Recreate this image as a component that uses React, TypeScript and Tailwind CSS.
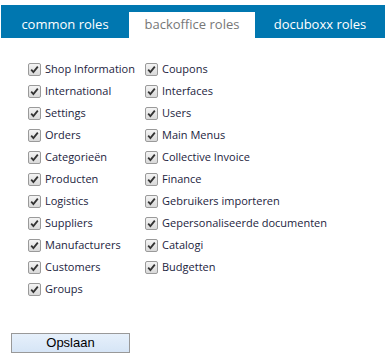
import React from "react";

const left = [
  "Shop Information",
  "International",
  "Settings",
  "Orders",
  "Categorieën",
  "Producten",
  "Logistics",
  "Suppliers",
  "Manufacturers",
  "Customers",
  "Groups",
];

const right = [
  "Coupons",
  "Interfaces",
  "Users",
  "Main Menus",
  "Collective Invoice",
  "Finance",
  "Gebruikers importeren",
  "Gepersonaliseerde documenten",
  "Catalogi",
  "Budgetten",
];

function Check() {
  return (
    <span className="flex h-[13px] w-[13px] shrink-0 items-center justify-center rounded-[2px] border border-[#9a9a9a] bg-gradient-to-b from-[#f4f4f4] to-[#d9d9d9]">
      <svg width="9" height="9" viewBox="0 0 9 9">
        <path d="M1.2 4.6 L3.4 7 L7.8 1.6" fill="none" stroke="#333" strokeWidth="1.8" />
      </svg>
    </span>
  );
}

function Row({ label }: { label: string }) {
  return (
    <label className="flex h-[22px] items-center gap-[4px]">
      <Check />
      <span className="whitespace-nowrap text-[11px] text-[#1c2440]">{label}</span>
    </label>
  );
}

export default function App() {
  return (
    <div className="h-[360px] w-[386px] bg-white font-['Open_Sans',sans-serif]">
      <div className="pt-[5px]">
        <div className="mx-[1px] flex h-[33px] items-end bg-[#0077b0] text-[13px]">
          <div className="flex h-[26px] w-[128px] items-center justify-center text-white">common roles</div>
          <div className="flex h-[26px] w-[126px] items-center justify-center bg-white text-[#777]">backoffice roles</div>
          <div className="flex h-[26px] flex-1 items-center justify-center text-white">docuboxx roles</div>
        </div>
      </div>
      <div className="flex gap-[5px] pl-[28px] pt-[20px]">
        <div className="flex w-[112px] flex-col">
          {left.map((l) => (
            <Row key={l} label={l} />
          ))}
        </div>
        <div className="flex flex-col">
          {right.map((l) => (
            <Row key={l} label={l} />
          ))}
        </div>
      </div>
      <div className="pl-[11px] pt-[29px]">
        <button className="h-[20px] w-[119px] border border-[#999] bg-gradient-to-b from-[#e6f0fb] to-[#d6e5f6] font-['Liberation_Sans',sans-serif] text-[13px] leading-none text-black">
          Opslaan
        </button>
      </div>
    </div>
  );
}
